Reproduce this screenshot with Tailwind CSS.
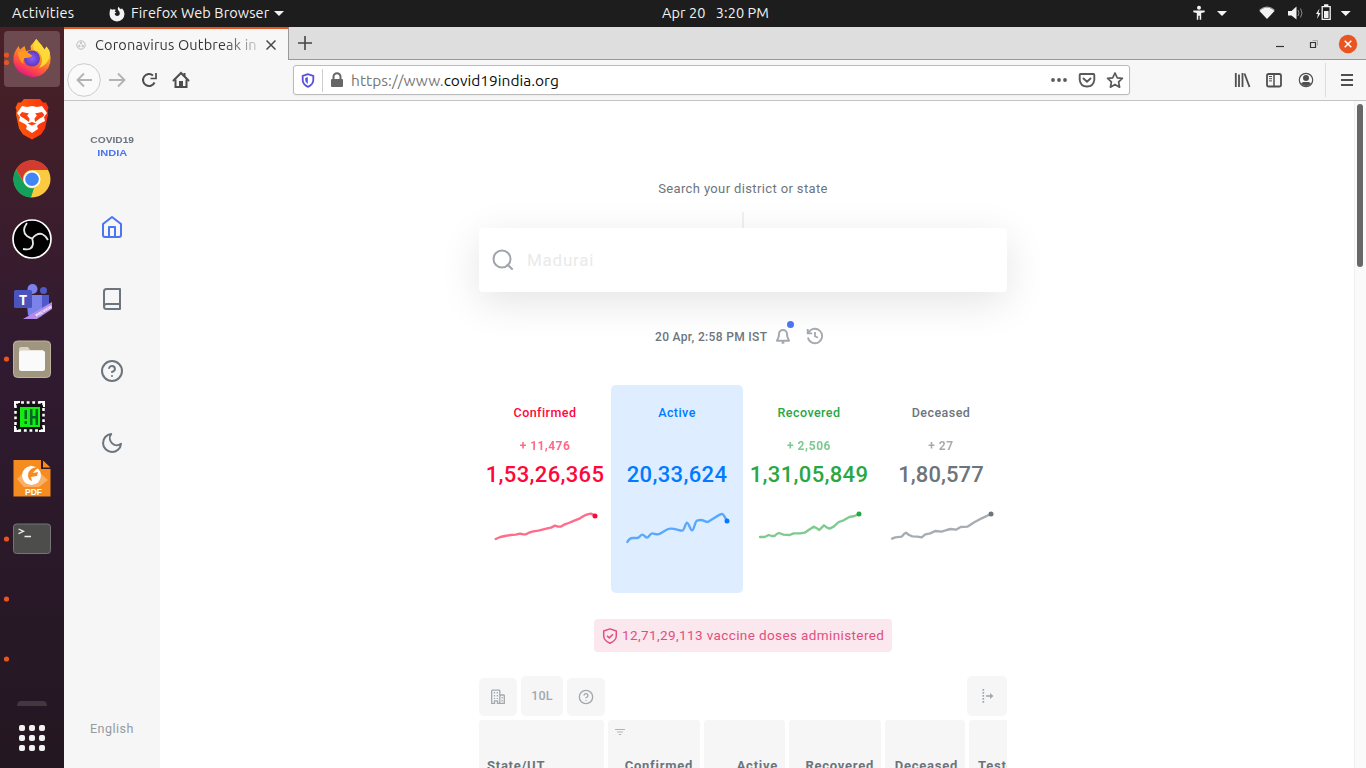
<!DOCTYPE html>
<html lang="en">
<head>
<meta charset="utf-8">
<title>Coronavirus Outbreak in India</title>
<script src="https://cdn.jsdelivr.net/npm/@tailwindcss/browser@4"></script>
</head>
<body class="w-[1366px] h-[768px] overflow-hidden bg-white whitespace-nowrap font-['Ubuntu','Noto_Sans',sans-serif]">
<!-- System bar -->
<header class="h-[27px] bg-[#1d1d1d] text-[#f2f2f2] text-[14.5px] leading-5 flex items-center">
  <span class="ml-3 w-[97px] pb-0.5 tracking-[0.3px]">Activities</span>
  <svg class="w-4 h-4" viewBox="0 0 16 16"><path fill="#f2f2f2" d="M1.600 2.500 3 3.800Q5 2.800 6.800 3.800L5.700 5.600 7.300 6.500 5.600 7.700Q5.800 9.800 8 10 10.700 9.900 10.800 7.300 10.700 5.200 9 4 8.200 2.500 9.700.4 10.200 2.300 12 3.300L13 2.200Q15.400 4.800 15.500 8 15 14.800 8 15.600.900 14.900.500 8 .4 5 1.600 2.500Z"/></svg>
  <span class="ml-[6px] w-[138px] pb-0.5 tracking-[0.1px]">Firefox Web Browser</span>
  <svg class="ml-[5px] w-[10px] h-[5px]" viewBox="0 0 10 5"><path fill="#f2f2f2" d="M0 0h10L5 5z"/></svg>
  <span class="ml-[378px] w-[107px] pb-0.5 tracking-[0.08px] whitespace-pre">Apr 20   3:20 PM</span>
  <svg class="ml-auto w-[174px] h-[27px]" viewBox="0 0 174 27" fill="#f2f2f2"><circle cx="7" cy="7.7" r="2"/><path d="M1.3 10.6h11.4v1.7L9.2 13v6.8H7.7v-4H6.3v4H4.8V13l-3.5-.7zM25 11h10l-5 5zM148.7 11h10l-5 5z"/><path d="M67.5 11q7.500-7.500 15 0L75 19z"/><path d="M67.5 10q7.500-6 15 0" fill="none" stroke="#aaa" stroke-width="1"/><path d="M96 11h3.500l5-4.500v13L99.500 15.500H96z"/><path d="M106 10q2 3 0 6M108.500 8.500q3 4.500 0 9" fill="none" stroke="#888"/><path d="M127.500 8.500 124 14h2l-1 5 3.500-6h-2z"/><path d="M130.200 6.700h8v12.600h-8zM132.700 5h3v1h-3z" fill="none" stroke="#f2f2f2" stroke-width="1.300"/><path d="M132 11h4.500v7H132z"/></svg>
</header>
<div class="flex h-[741px]">
<!-- Dock -->
<aside class="w-16 h-full shrink-0 bg-linear-to-b from-[#4a2026] via-[#301a30] via-45% to-[#231721]">
<svg class="w-16 h-[741px]" viewBox="0 27 64 741">
  <defs>
    <linearGradient id="fx" x1=".8" y1="0" x2=".3" y2="1"><stop offset="0" stop-color="#fff14f"/><stop offset=".4" stop-color="#ff9a20"/><stop offset=".75" stop-color="#ff4848"/><stop offset="1" stop-color="#e0128a"/></linearGradient>
    <radialGradient id="fp"><stop offset="0" stop-color="#8b5bff"/><stop offset="1" stop-color="#5a3bc0"/></radialGradient>
    <linearGradient id="br" x1="0" x2="1"><stop offset="0" stop-color="#ff5a0a"/><stop offset="1" stop-color="#fb3010"/></linearGradient>
  </defs>
  <rect x="4" y="31" width="56" height="56" rx="4" fill="#6c4a4f"/>
  <g fill="#e95420"><circle cx="6.500" cy="55" r="2.600"/><circle cx="6.500" cy="62.500" r="2.600"/><circle cx="6.500" cy="359" r="2.600"/><circle cx="6.500" cy="539" r="2.600"/><circle cx="6.500" cy="599" r="2.600"/><circle cx="6.500" cy="659" r="2.600"/></g>
  <path fill="url(#fx)" d="M36.500 39 41 45 44 50 46.500 46.500 49.500 51Q53 65 45 72 38 79 28 76 16 73 13.500 62 13 54 16 50L18.500 46 20 49.500 24.500 46 26 51 31 50 30.500 46Z"/>
  <circle cx="32" cy="58.500" r="8" fill="url(#fp)"/><path fill="#ff9a20" d="M18 52q7-3 12 2l2.500 2q-4 2.500-8 2-2 2.500-1 6-5-4-5.500-12z"/><path fill="#ffda36" d="M36 39q-4 6-2 11 8 1 8 11-1 5-3 7 10-4 11-14-1-5-3.500-7.500L45 50q-3-5-9-11z"/>
  <path fill="url(#br)" d="M24 99h16l3 3.500h3l2.500 5-1 3 .5 4-3 14-4 6-9 5-9-5-4-6-3-14 .5-4-1-3 2.500-5h3z"/>
  <path fill="#fff" d="M22 106l5 1 5-1 5 1 5-1 5 7-3 4 1 4-6 3-2 2 1 3-6 4-6-4 1-3-2-2-6-3 1-4-3-4z"/><path fill="#fb4010" d="m22 112 7 1.500-2 2 2.500 3-.5 3.500-5.500-4-2-1-2-2zM42 112l-7 1.500 2 2-2.500 3 .5 3.500 5.500-4 2-1 2-2zM27.500 123.500l4.500-1.500 4.500 1.500-4.500 2z"/>
  <circle cx="32" cy="179" r="18.500" fill="#fcca3f"/><path fill="#d33b30" d="M16 169.500A18.500 18.500 0 0 1 48.300 170H32a9 9 0 0 0-8.500 12z"/><path fill="#12a05b" d="M16 169.500 24.500 184a9 9 0 0 0 9.500 4L31 197.500A18.500 18.500 0 0 1 16 169.500z"/><circle cx="32" cy="179.300" r="8.500" fill="#fff"/><circle cx="32" cy="179.300" r="6.800" fill="#4286f5"/>
  <circle cx="32" cy="239" r="19" fill="#000" stroke="#fff" stroke-width="1.700"/><g fill="none" stroke="#e8e8e8" stroke-width="1.800"><path d="M27 223q-6 8 0 13 3 2 5 2.500"/><path d="M48 240q-5-9-12-5-3 2-4 4"/><path d="M23 249q9 2 10-5 0-3-1-6"/></g>
  <circle cx="32.500" cy="289" r="5" fill="#7b83eb"/><circle cx="43.500" cy="290.500" r="3.500" fill="#5059c9"/><path fill="#5059c9" d="M38 295h11v16H38z"/><path fill="#7b83eb" d="M26 295h16v21q-8 4-14-1z"/><rect x="14" y="290" width="18" height="18" rx="1.500" fill="#4b53bc"/><text x="23" y="304.500" text-anchor="middle" font-family="Open Sans" font-weight="700" font-size="14" fill="#fff">T</text><path fill="#b58ae8" d="m23 319 29-17v7l-15 10z"/><text transform="translate(36.500 317) rotate(-31)" font-family="Liberation Sans" font-weight="700" font-size="4" fill="#fff">PREVIEW</text>
  <rect x="13.500" y="341" width="37" height="36.500" rx="4" fill="#a0967f" stroke="#bdb39d"/><path fill="#d8d2c2" d="M19 349q0-2 2-2h7l2 3h13v8H19z"/><rect x="19" y="350.500" width="26" height="20.500" rx="2.500" fill="#fafafa"/>
  <path d="M15.500 402.500h28v28h-28z" fill="#111" stroke="#fff" stroke-width="2.500" stroke-dasharray="2.800 2.800"/><path fill="none" stroke="#fff" stroke-width="2" d="M15 407v-5H20M39 402h5v5M44 426v5H39M20 431h-5v-5"/><path fill="#14ec14" d="M20 407h20v20H20z"/><path fill="#062" d="M24.500 410h2.500v9h-2.500zM24.500 421h2.500v3h-2.500zM30 409h2.500v16H30zM35.500 409h2.500v16h-2.500zM32 416h5v2.500h-5z"/>
  <path fill="#f68b1f" d="M13.500 460H41v9h9.500v27.500h-37zM43 460.500l7.500 7H43z"/><path fill="#fbb067" d="m17 479 14-14 17 15-9 7H24z"/><circle cx="31.500" cy="475.500" r="9.500" fill="#fff"/><path fill="#f68b1f" d="M41 467q-12-1-13 8 0 5 4 6l-1-4 6-1 1-4-5 1q2-4 8-6z"/><text x="33.500" y="495" text-anchor="middle" font-family="Liberation Sans" font-weight="700" font-size="8.500" fill="#fff">PDF</text>
  <rect x="13.500" y="524" width="37" height="29.500" rx="3" fill="#4d4d4c" stroke="#757575"/><path fill="none" stroke="#eee" stroke-width="1.300" d="m18.500 529 5 2.300-5 2.300M24.500 536.500H31"/>
  <path d="M17 706q0-5 4-5h22q4 0 4 5z" fill="#453640"/>
  <g fill="#f2f2f2"><rect x="19" y="725" width="6" height="6" rx="2"/><rect x="29" y="725" width="6" height="6" rx="2"/><rect x="39" y="725" width="6" height="6" rx="2"/><rect x="19" y="735" width="6" height="6" rx="2"/><rect x="29" y="735" width="6" height="6" rx="2"/><rect x="39" y="735" width="6" height="6" rx="2"/><rect x="19" y="745" width="6" height="6" rx="2"/><rect x="29" y="745" width="6" height="6" rx="2"/><rect x="39" y="745" width="6" height="6" rx="2"/></g>
</svg>
</aside>
<div class="w-[1302px] h-full flex flex-col">
<!-- Tab strip -->
<div class="h-[33px] shrink-0 flex bg-[#dedede] text-[14.5px] text-[#333]">
  <div class="w-[225px] h-full bg-[#f7f7f7] border-t-2 border-[#e95420] border-r border-r-[#999] flex items-center">
    <svg class="ml-3 w-[10px] h-[10px] shrink-0" viewBox="0 0 10 10" fill="none" stroke="#b8bbbf"><circle cx="5" cy="5" r="4.200"/><circle cx="5" cy="3" r=".8"/><circle cx="3.300" cy="6" r=".8"/><circle cx="6.700" cy="6" r=".8"/></svg>
    <span class="ml-[9px] w-[164px] shrink-0 overflow-hidden tracking-[0.16px] bg-linear-to-r from-[#333] from-78% to-[#333]/20 bg-clip-text text-transparent">Coronavirus Outbreak in</span>
    <svg class="ml-[7px] w-[10px] h-[10px] shrink-0" viewBox="0 0 10 10" stroke="#4a4a4a" stroke-width="1.500"><path d="M.5.5l9 9M9.500.5l-9 9"/></svg>
  </div>
  <div class="flex-1 border-b border-[#999] flex items-center">
    <svg class="ml-[9px] w-[14px] h-[14px]" viewBox="0 0 14 14" stroke="#444" stroke-width="1.600"><path d="M7 0v14M0 7h14"/></svg>
    <svg class="ml-auto w-[100px] h-[32px]" viewBox="0 0 100 32" fill="none"><path d="M10 19.500h8" stroke="#333" stroke-width="1.200"/><path d="M44.500 15.500h5v5h-5z" stroke="#333" stroke-width="1.200"/><path d="M46.500 13.500h5v5" stroke="#aaa" stroke-width="1"/><circle cx="82" cy="17" r="9.200" fill="#e95420"/><path d="m78.700 13.700 6.600 6.600m0-6.600-6.600 6.600" stroke="#fff" stroke-width="1.500"/></svg>
  </div>
</div>
<!-- Navigation toolbar -->
<div class="h-[41px] shrink-0 bg-[#f7f7f7] border-b border-[#c4c4c4] flex items-center">
  <svg class="w-[130px] h-10" viewBox="64 60 130 40" fill="none"><circle cx="84" cy="80" r="16.300" fill="#fafafa" stroke="#ccc"/><g stroke="#b4b4b4" stroke-width="1.900"><path d="M92 80H77.500M84 73.500 77.500 80l6.500 6.500M109 80h15M118 73.500l6.500 6.500-6.500 6.500"/></g><g stroke="#4d4d4d" stroke-width="2"><path d="M154.500 82.500a6 6 0 1 1-1.500-7"/><path d="M156 73v5.500H150.500" stroke-width="1.700"/><path d="M173.500 80.500 181 73l7.500 7.500" stroke-linecap="round"/><path d="M175.500 79.500V87h11v-7.500"/><path d="M184.500 76v-3"/></g><path fill="#4d4d4d" d="M179 81h4v6h-4z"/></svg>
  <div class="ml-[99px] w-[837px] h-[30px] rounded-[3px] border border-[#bbb] bg-white flex items-center shadow-xs">
    <svg class="w-[57px] h-7" viewBox="294 66 57 28"><path fill="none" stroke="#5a4fe0" stroke-width="1.800" d="M308 74.200 302.700 76v4q0 4.500 5.300 6.800 5.300-2.300 5.300-6.800v-4z"/><path fill="#4b5be0" d="M307.800 77v7q-2.600-1.500-2.600-4v-2z"/><path stroke="#ccc" d="M322.500 69v23"/><path fill="#666" d="M332 79h10q1 0 1 1v6q0 1-1 1h-10q-1 0-1-1v-6q0-1 1-1z"/><path fill="none" stroke="#666" stroke-width="2" d="M333.500 79v-2.200a3.500 3.500 0 0 1 7 0V79"/></svg>
    <span class="pt-px text-[15.5px] tracking-[0.05px] text-[#777]">https://www.<span class="text-[#0c0c0d] tracking-[0px]">covid19india.org</span></span>
    <svg class="ml-auto w-[84px] h-7" viewBox="1045 66 84 28" fill="none" stroke="#5a5a5a" stroke-width="1.900"><g fill="#5a5a5a" stroke="none"><circle cx="1053" cy="80" r="1.900"/><circle cx="1059" cy="80" r="1.900"/><circle cx="1065" cy="80" r="1.900"/></g><path d="M1080.500 74h13q.8 0 .8 1v5q-.8 6.500-7.300 6.500t-7.300-6.500v-5q0-1 .8-1z"/><path d="m1083.500 78.500 3.500 3.300 3.500-3.300" stroke-linecap="round"/><path stroke-width="1.700" stroke-linejoin="round" d="m1115 73 2.300 4.800 5.100.6-3.800 3.500 1 5.300-4.600-2.600-4.600 2.600 1-5.300-3.800-3.500 5.100-.6z"/></svg>
  </div>
  <svg class="ml-auto w-[136px] h-10" viewBox="1230 60 136 40" fill="none" stroke="#4f4f4f" stroke-width="1.800"><path d="M1235.800 73v14M1239 74.500V87M1242.500 73v14M1244.500 73.500l5 13.500"/><rect x="1267" y="74" width="14" height="12.500" rx="1.800"/><path d="M1274 74v12.500" stroke-width="1.500"/><path stroke-width="1" d="M1269 76.500h3M1269 78.700h3M1269 80.900h3"/><circle cx="1306" cy="80" r="6.700" stroke-width="1.200"/><circle cx="1306" cy="78" r="3" fill="#4f4f4f" stroke="none"/><path fill="#4f4f4f" stroke="none" d="M1301 83.500q1.500-2 3-1.500h4q1.500-.5 3 1.500-2 2.500-5 2.500t-5-2.500z"/><path stroke="#ddd" stroke-width="1" d="M1325.500 63v34"/><path d="M1341 75h12M1341 80h12M1341 85h12" stroke-width="2"/></svg>
</div>
<!-- Page -->
<div class="flex h-[667px] font-['Archia','Roboto',sans-serif] text-[#6c757d]">
  <nav class="w-24 h-full bg-[#f6f6f6] flex flex-col items-center">
    <div class="mt-[33px] text-center font-['Archia','Liberation_Sans',sans-serif] font-bold text-[8.5px] leading-[13px]"><div class="scale-x-120">COVID19</div><div class="text-[#4c75f2] scale-x-130">INDIA</div></div>
    <div class="mt-[55px] flex flex-col gap-12">
      <svg class="w-6 h-6" viewBox="0 0 24 24" fill="none" stroke="#4c75f2" stroke-width="2" stroke-linejoin="round"><path d="m12 2 9 7v11a2 2 0 0 1-2 2H5a2 2 0 0 1-2-2V9z"/><path d="M9 22V12h6v10"/></svg>
      <svg class="w-6 h-6" viewBox="0 0 24 24" fill="none" stroke="#6c757d" stroke-width="2" stroke-linejoin="round"><path d="M4 19.500A2.500 2.500 0 0 1 6.500 17H20"/><path d="M6.500 2H20v20H6.500A2.500 2.500 0 0 1 4 19.500v-15A2.500 2.500 0 0 1 6.500 2z"/></svg>
      <svg class="w-6 h-6" viewBox="0 0 24 24" fill="none" stroke="#6c757d" stroke-width="2" stroke-linecap="round"><circle cx="12" cy="12" r="10"/><path d="M9.090 9a3 3 0 0 1 5.830 1c0 2-3 3-3 3M12 17h.01"/></svg>
      <svg class="w-6 h-6" viewBox="0 0 24 24" fill="none" stroke="#6c757d" stroke-width="2" stroke-linejoin="round"><path d="M21 12.790A9 9 0 1 1 11.210 3 7 7 0 0 0 21 12.790z"/></svg>
    </div>
    <div class="mt-auto mb-[30px] text-[12.5px] leading-[18px] text-[#949aa0] tracking-[0.5px]">English</div>
  </nav>
  <main class="w-[528px] ml-[319px] h-full flex flex-col items-center">
    <div class="mt-[78px] h-5 shrink-0 leading-5 text-[13px] tracking-[0.37px]">Search your district or state</div>
    <div class="mt-[13px] w-0.5 h-4 shrink-0 bg-[#f1f1f2]"></div>
    <div class="w-full h-16 shrink-0 rounded bg-white shadow-[0_10px_40px_rgba(0,0,0,0.11)] flex items-center">
      <svg class="ml-3 w-6 h-6" viewBox="0 0 24 24" fill="none" stroke="#a0a5ab" stroke-width="2" stroke-linecap="round"><circle cx="11" cy="11" r="8.500"/><path d="m21 21-4.300-4.300"/></svg>
      <span class="ml-3 pt-0.5 text-[17px] tracking-[0.75px] text-[#e9eaeb]">Madurai</span>
    </div>
    <div class="mt-8 h-6 w-full shrink-0 flex items-center">
      <span class="ml-[176px] w-[112px] pt-px text-[12px] font-medium tracking-[0.33px]">20 Apr, 2:58 PM IST</span>
      <div class="relative ml-2 w-4 h-4"><svg class="w-4 h-4" viewBox="0 0 24 24" fill="none" stroke="#a4a9af" stroke-width="3" stroke-linejoin="round"><path d="M18 9A6 6 0 0 0 6 9c0 7-3 9-3 10h18c0-1-3-3-3-10M10 22h4"/></svg><i class="absolute left-[12px] -top-[7px] w-[7px] h-[7px] rounded-full bg-[#4c75f2]"></i></div>
      <svg class="ml-[15px] w-[18px] h-[18px]" viewBox="0 0 18 18" fill="none" stroke="#a4a9af" stroke-width="1.800"><path d="M2.300 6.200a7.200 7.200 0 1 1-.4 4.300M1.700 2v4.400h4.500M9 5v4.300l3 1.500"/></svg>
    </div>
    <div class="mt-[37px] w-full h-[208px] shrink-0 grid grid-cols-4 text-center">
      <section class="pt-[18px] text-[#ff073a]">
        <h5 class="h-5 leading-5 text-[12.5px] font-medium tracking-[0.45px]">Confirmed</h5>
        <p class="mt-[13px] h-5 leading-5 text-[12px] font-bold opacity-60 tracking-[0.45px]">+ 11,476</p>
        <h1 class="mt-[3px] h-8 leading-8 text-[22px] font-medium tracking-[0.35px]">1,53,26,365</h1>
        <svg class="mt-[14px] w-[132px] h-[60px]" viewBox="12 375 396 180"><polyline fill="none" stroke="#ff6b89" stroke-width="7" stroke-linejoin="round" stroke-linecap="round" points="62,477 76,471 90,468 107,465 122,464 135,461 145,463 153,463 162,458 175,454 190,452 205,448 217,445 228,443 240,437 249,440 257,440 267,434 281,429 298,422 315,415 326,408 337,403 348,401 360,407"/><circle cx="360" cy="408" r="7.500" fill="#ff073a"/></svg>
      </section>
      <section class="pt-[18px] rounded-[5px] bg-[#deedff] text-[#007bff]">
        <h5 class="h-5 leading-5 text-[12.5px] font-medium tracking-[0.45px]">Active</h5>
        <p class="mt-[13px] h-5">&nbsp;</p>
        <h1 class="mt-[3px] h-8 leading-8 text-[22px] font-medium tracking-[0.35px]">20,33,624</h1>
        <svg class="mt-[14px] w-[132px] h-[60px]" viewBox="408 375 396 180"><path fill="none" stroke="#59a8ff" stroke-width="7" stroke-linejoin="round" stroke-linecap="round" d="M457 486C461 479 466 474 472 474L486 474C493 474 497 464 502 464S511 473 516 473 526 460 531 460C537 460 541 463 548 463C560 463 570 447 585 446S613 452 622 452C628 452 631 428 636 428S646 451 651 451C657 451 660 424 666 422L676 420C685 419 691 426 697 426C704 424 732 402 741 402C746 402 751 415 756 422"/><circle cx="756" cy="423" r="7.500" fill="#007bff"/></svg>
      </section>
      <section class="pt-[18px] text-[#28a745]">
        <h5 class="h-5 leading-5 text-[12.5px] font-medium tracking-[0.45px]">Recovered</h5>
        <p class="mt-[13px] h-5 leading-5 text-[12px] font-bold opacity-60 tracking-[0.6px]">+ 2,506</p>
        <h1 class="mt-[3px] h-8 leading-8 text-[22px] font-medium tracking-[0.35px]">1,31,05,849</h1>
        <svg class="mt-[14px] w-[132px] h-[60px]" viewBox="9 375 396 180"><polyline fill="none" stroke="#7eca8f" stroke-width="7" stroke-linejoin="round" stroke-linecap="round" points="60,471 74,471 86,465 95,468 104,468 110,462 117,459 130,464 149,465 161,460 180,460 194,458 207,449 221,440 229,444 238,450 245,443 252,436 261,443 269,446 281,440 296,426 311,421 328,411 344,408 357,402"/><circle cx="357" cy="402" r="7.500" fill="#28a745"/></svg>
      </section>
      <section class="pt-[18px] text-[#6c757d]">
        <h5 class="h-5 leading-5 text-[12.5px] font-medium tracking-[0.45px]">Deceased</h5>
        <p class="mt-[13px] h-5 leading-5 text-[12px] font-bold opacity-60 tracking-[0.5px]">+ 27</p>
        <h1 class="mt-[3px] h-8 leading-8 text-[22px] font-medium tracking-[0.1px]">1,80,577</h1>
        <svg class="mt-[14px] w-[132px] h-[60px]" viewBox="405 375 396 180"><polyline fill="none" stroke="#a7acb1" stroke-width="7" stroke-linejoin="round" stroke-linecap="round" points="456,476 466,472 485,470 492,462 498,458 507,465 517,469 532,470 545,472 556,463 571,460 585,453 605,455 620,450 632,447 648,449 662,441 682,440 703,427 725,415 753,402"/><circle cx="753" cy="402" r="7.500" fill="#6c757d"/></svg>
      </section>
    </div>
    <div class="mt-[26px] w-[298px] h-[33px] shrink-0 rounded-[4px] bg-[#fae8ee] text-[#e0507f] flex items-center">
      <svg class="ml-2 w-4 h-4" viewBox="0 0 16 16" fill="none" stroke="#e0507f" stroke-width="1.500" stroke-linejoin="round"><path d="M8 .9 14.300 3v5q0 4.500-6.300 7.200Q1.700 12.500 1.700 8V3zM5 7.700l2.300 2.200 3.700-3.700"/></svg>
      <span class="ml-1 text-[13.5px] tracking-[0.39px]">12,71,29,113 vaccine doses administered</span>
    </div>
    <div class="mt-6 w-full h-10 shrink-0 flex items-end gap-1 text-[#a3a8ad]">
      <div class="w-[38px] h-[38px] rounded-[5px] bg-[#f6f6f6] flex items-center justify-center"><svg class="w-4 h-4" viewBox="0 0 16 16" fill="none" stroke="#a3a8ad" stroke-width="1.300"><path d="M1.700 14.300V2q0-.8.800-.8H9q.8 0 .8.800v12.300H7.500v-2.500H4.500v2.500zM9.800 6h3.700q.8 0 .8.800v7.500H9.800"/><path stroke-dasharray="1.500 1.500" d="M4.500 3v7M7.300 3v7M12.100 8v5"/></svg></div>
      <div class="w-[42px] h-10 pt-px rounded-[5px] bg-[#f6f6f6] flex items-center justify-center text-[12.5px] font-medium tracking-[0.2px]">10L</div>
      <div class="w-[38px] h-[38px] rounded-[5px] bg-[#f6f6f6] flex items-center justify-center"><svg class="w-4 h-4" viewBox="0 0 24 24" fill="none" stroke="#a3a8ad" stroke-width="2" stroke-linecap="round"><circle cx="12" cy="12" r="10"/><path d="M9.090 9a3 3 0 0 1 5.830 1c0 2-3 3-3 3M12 17h.01"/></svg></div>
      <div class="ml-auto w-10 h-10 rounded-[5px] bg-[#f6f6f6] flex items-center justify-center"><svg class="w-4 h-4" viewBox="0 0 16 16" fill="none" stroke="#a3a8ad"><path stroke-width="1.700" stroke-dasharray="1.700 1.300" d="M4.300 1v14"/><path stroke-width="1.600" d="M7 8h5"/><path fill="#a3a8ad" stroke="none" d="m11 5 3.500 3-3.500 3z"/></svg></div>
    </div>
    <div class="mt-1 w-full h-[48px] shrink-0 overflow-hidden flex gap-1 text-[13px] leading-5 font-bold tracking-[0.75px] *:h-[70px] *:shrink-0 *:rounded-t-[3px] *:bg-[#f6f6f6] *:pt-[36px]">
      <div class="w-[125px] pl-2">State/UT</div>
      <div class="w-[92px] pr-[7px] text-right relative">Confirmed<svg class="absolute left-[7px] top-[8px] w-[10px] h-[8px]" viewBox="0 0 10 8" stroke="#b0b4b8"><path d="M0 1.500h10M2 4h6M3.800 6.500h2.400"/></svg></div>
      <div class="w-[81px] pr-[7px] text-right">Active</div>
      <div class="w-[92px] pr-[7px] text-right">Recovered</div>
      <div class="w-[80px] pr-[7px] text-right">Deceased</div>
      <div class="w-[80px] pl-[9px]">Tested</div>
    </div>
  </main>
  <div class="ml-auto w-3 h-full bg-[#fafafa] border-l border-[#f0f0f0] pt-[3px] pl-[2px]"><div class="w-[6px] h-[163px] rounded-full bg-[#686868]"></div></div>
</div>
</div>
</div>
</body>
</html>
